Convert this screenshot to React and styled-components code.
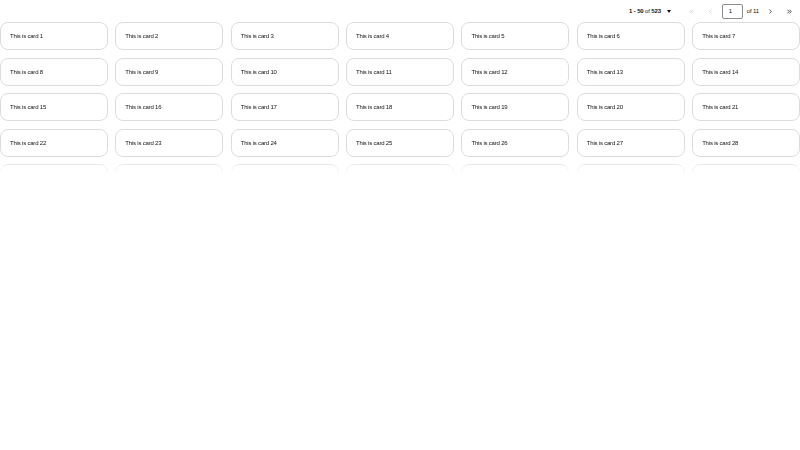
import React from 'react';
import styled, { createGlobalStyle } from 'styled-components';
import { ChevronsLeft, ChevronLeft, ChevronRight, ChevronsRight } from 'lucide-react';

const GlobalStyle = createGlobalStyle`
  body {
    margin: 0;
    background: #fff;
    font-family: "Liberation Sans", Arial, sans-serif;
    color: #151515;
  }
`;

const Toolbar = styled.div`
  height: 22px;
  display: flex;
  align-items: center;
  justify-content: flex-end;
  padding-right: 3px;
  font-size: 6px;
  letter-spacing: -0.15px;
`;

const Toggle = styled.div`
  display: flex;
  align-items: center;
  gap: 4px;
  margin-right: 13px;
  b { font-weight: 600; }
`;

const Caret = styled.span`
  width: 0;
  height: 0;
  border-left: 2.5px solid transparent;
  border-right: 2.5px solid transparent;
  border-top: 3px solid #151515;
  margin-left: 2px;
`;

const NavButton = styled.div`
  width: 16px;
  height: 16px;
  display: flex;
  align-items: center;
  justify-content: center;
  margin-right: ${p => (p.$last ? 0 : 3)}px;
  color: ${p => (p.$disabled ? '#b8bbbe' : '#151515')};
`;

const PageInput = styled.div`
  width: 21px;
  height: 15px;
  box-sizing: border-box;
  border: 1px solid #8a8d90;
  border-radius: 2px;
  display: flex;
  align-items: center;
  padding-left: 6px;
`;

const OfPages = styled.span`
  margin: 0 3px 0 4px;
`;

const Viewport = styled.div`
  height: 152px;
  overflow: hidden;
  mask-image: linear-gradient(to bottom, black 136px, transparent 152px);
`;

const Grid = styled.div`
  display: grid;
  grid-template-columns: repeat(7, 1fr);
  grid-auto-rows: 28px;
  gap: 7.5px;
`;

const Card = styled.div`
  box-sizing: border-box;
  border: 1px solid #dcdcdc;
  border-radius: 8px;
  display: flex;
  align-items: center;
  padding-left: 9px;
  font-size: 6px;
  letter-spacing: -0.2px;
  color: #151515;
`;

const cards = Array.from({ length: 35 }, (_, i) => i + 1);

export default function App() {
  return (
    <>
      <GlobalStyle />
      <Toolbar>
        <Toggle>
          <span><b>1 - 50</b> of <b>523</b></span>
          <Caret />
        </Toggle>
        <NavButton $disabled><ChevronsLeft size={7} strokeWidth={2} /></NavButton>
        <NavButton $disabled><ChevronLeft size={7} strokeWidth={2} /></NavButton>
        <PageInput>1</PageInput>
        <OfPages>of 11</OfPages>
        <NavButton><ChevronRight size={7} strokeWidth={2.5} /></NavButton>
        <NavButton $last><ChevronsRight size={7} strokeWidth={2.5} /></NavButton>
      </Toolbar>
      <Viewport>
        <Grid>
          {cards.map(n => (
            <Card key={n}>{n <= 28 ? `This is card ${n}` : ''}</Card>
          ))}
        </Grid>
      </Viewport>
    </>
  );
}
